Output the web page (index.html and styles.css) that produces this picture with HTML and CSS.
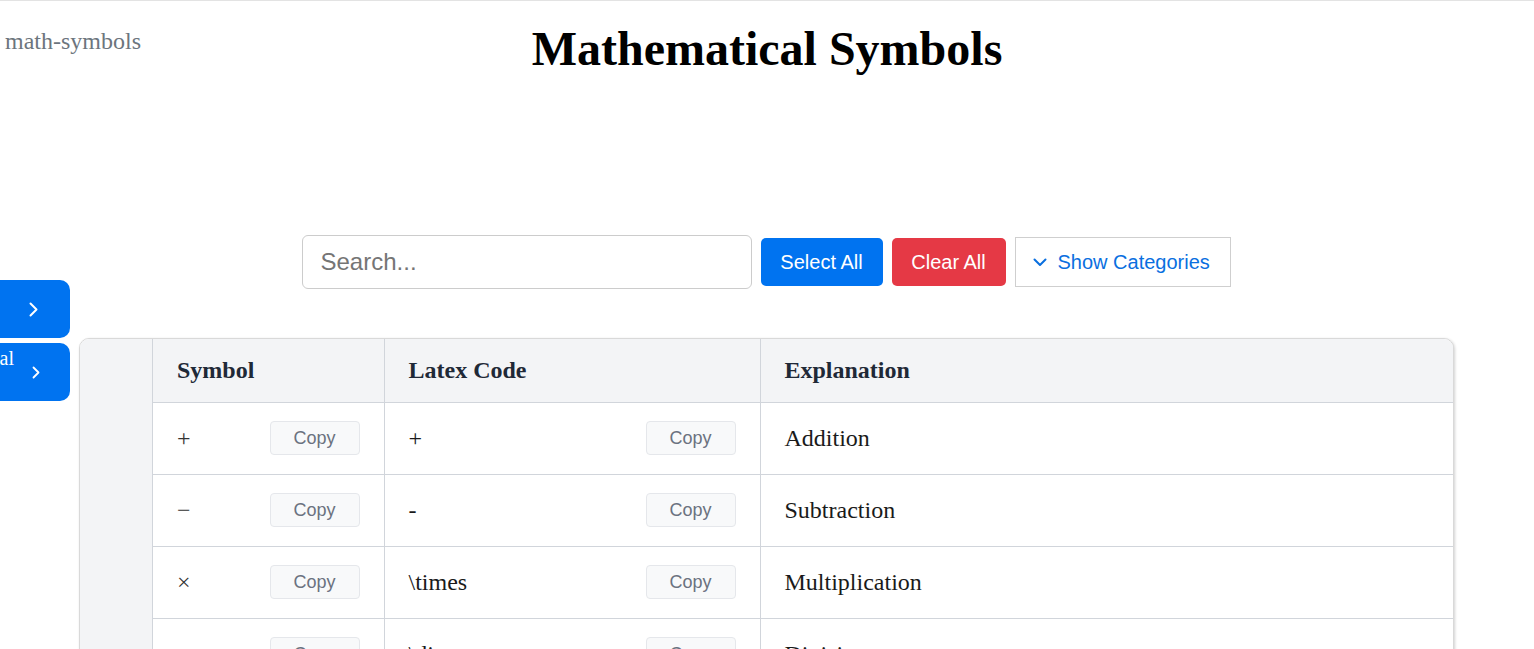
FILE: index.html
```html
<!DOCTYPE html>
<html lang="en">
<head>
<meta charset="utf-8">
<title>Mathematical Symbols</title>
<link rel="stylesheet" href="styles.css">
</head>
<body>
<div class="page">
  <header class="top">
    <div class="crumb">math-symbols</div>
    <h1 class="title">Mathematical Symbols</h1>
    <div></div>
  </header>

  <div class="controls">
    <input class="search" type="text" placeholder="Search...">
    <button class="btn btn-primary">Select All</button>
    <button class="btn btn-danger">Clear All</button>
    <button class="btn btn-outline">
      <svg class="chev-down" width="14" height="9" viewBox="0 0 14 9"><polyline points="1.5,1.5 7,7 12.5,1.5" fill="none" stroke="currentColor" stroke-width="2" stroke-linecap="round" stroke-linejoin="round"/></svg>
      <span>Show Categories</span>
    </button>
  </div>

  <div class="table-card">
    <div class="side-col"></div>
    <table class="sym-table">
      <colgroup><col class="c1"><col class="c2"><col></colgroup>
      <thead>
        <tr><th>Symbol</th><th>Latex Code</th><th>Explanation</th></tr>
      </thead>
      <tbody>
        <tr>
          <td><div class="cell"><span class="sym">+</span><button class="copy">Copy</button></div></td>
          <td><div class="cell"><span class="code">+</span><button class="copy">Copy</button></div></td>
          <td>Addition</td>
        </tr>
        <tr>
          <td><div class="cell"><span class="sym">−</span><button class="copy">Copy</button></div></td>
          <td><div class="cell"><span class="code">-</span><button class="copy">Copy</button></div></td>
          <td>Subtraction</td>
        </tr>
        <tr>
          <td><div class="cell"><span class="sym">×</span><button class="copy">Copy</button></div></td>
          <td><div class="cell"><span class="code">\times</span><button class="copy">Copy</button></div></td>
          <td>Multiplication</td>
        </tr>
        <tr>
          <td><div class="cell"><span class="sym">÷</span><button class="copy">Copy</button></div></td>
          <td><div class="cell"><span class="code">\div</span><button class="copy">Copy</button></div></td>
          <td>Division</td>
        </tr>
      </tbody>
    </table>
  </div>
</div>

<nav class="side-panel">
  <button class="side-btn side-btn-1">
    <span class="side-text">Operators</span>
    <svg width="9" height="15" viewBox="0 0 9 15"><polyline points="1.5,1.5 7.5,7.5 1.5,13.5" fill="none" stroke="#fff" stroke-width="2" stroke-linecap="round" stroke-linejoin="round"/></svg>
  </button>
  <button class="side-btn side-btn-2">
    <span class="side-text side-text-2">Geometrical</span>
    <svg width="8" height="13" viewBox="0 0 8 13"><polyline points="1.5,1.5 6.5,6.5 1.5,11.5" fill="none" stroke="#fff" stroke-width="1.8" stroke-linecap="round" stroke-linejoin="round"/></svg>
  </button>
</nav>
</body>
</html>
```

FILE: styles.css
```css
* { box-sizing: border-box; }

html, body {
  margin: 0;
  padding: 0;
  background: #fff;
}

body {
  font-family: "Liberation Serif", "Times New Roman", serif;
  color: #111;
  overflow: hidden;
}

.page {
  border-top: 1px solid #e3e3e3;
}

.top {
  display: grid;
  grid-template-columns: 1fr auto 1fr;
  align-items: start;
}

.crumb {
  padding: 26px 0 0 5px;
  font-size: 24px;
  line-height: 28px;
  color: #6c757d;
}

.title {
  margin: 20px 0 0;
  font-size: 48px;
  line-height: 56px;
  font-weight: bold;
  color: #000;
}

.controls {
  display: flex;
  justify-content: center;
  align-items: center;
  gap: 9px;
  margin-top: 158px;
  padding-right: 2px;
}

.search {
  width: 450px;
  height: 54px;
  padding: 0 18px;
  border: 1px solid #cccccc;
  border-radius: 6px;
  font-family: "Liberation Sans", Arial, sans-serif;
  font-size: 24px;
  color: #222;
  outline: none;
}

.search::placeholder { color: #757575; }

.btn {
  display: inline-flex;
  align-items: center;
  justify-content: center;
  height: 48px;
  padding: 0;
  border: none;
  border-radius: 5px;
  font-family: "Liberation Sans", Arial, sans-serif;
  font-size: 20px;
  line-height: 24px;
  color: #fff;
  cursor: pointer;
}

.btn-primary { width: 122px; background: #0073f0; }
.btn-danger { width: 114px; background: #e53945; }

.btn-outline {
  width: 216px;
  height: 50px;
  justify-content: flex-start;
  padding: 0 0 0 17px;
  border: 1px solid #cfcfcf;
  border-radius: 0;
  background: #fff;
  color: #0a6fdf;
  gap: 11px;
}

.chev-down { display: block; }

.table-card {
  display: flex;
  margin: 49px 80px 0 79px;
  border: 1px solid #d9d9d9;
  border-radius: 10px;
  overflow: hidden;
  box-shadow: 1px 1px 3px rgba(0, 0, 0, 0.18);
  background: #fff;
}

.side-col {
  flex: 0 0 73px;
  background: #f3f4f6;
  border-right: 1px solid #d1d5db;
}

.sym-table {
  flex: 1;
  border-collapse: collapse;
  table-layout: fixed;
}

.c1 { width: 231px; }
.c2 { width: 376px; }

.sym-table th {
  height: 63px;
  padding: 0 24px;
  background: #f3f4f6;
  border-bottom: 1px solid #d1d5db;
  border-right: 1px solid #d1d5db;
  text-align: left;
  font-size: 24px;
  font-weight: bold;
  color: #1f2937;
}

.sym-table td {
  height: 72px;
  padding: 0 24px;
  border-bottom: 1px solid #d1d5db;
  border-right: 1px solid #d1d5db;
  font-size: 24px;
  color: #1a1a1a;
}

.sym-table th:last-child,
.sym-table td:last-child { border-right: none; }

.cell {
  display: flex;
  justify-content: space-between;
  align-items: center;
}

.sym { color: #333; }
.code { color: #1a1a1a; }

.copy {
  width: 90px;
  height: 34px;
  padding: 0;
  border: 1px solid #e5e7eb;
  border-radius: 4px;
  background: #f8f9fa;
  font-family: "Liberation Sans", Arial, sans-serif;
  font-size: 18px;
  color: #6b7280;
  cursor: pointer;
}

.side-panel {
  position: fixed;
  left: -130px;
  top: 280px;
  width: 200px;
  display: flex;
  flex-direction: column;
  gap: 5px;
}

.side-btn {
  display: flex;
  align-items: center;
  height: 58px;
  padding: 0 32px 0 16px;
  border: none;
  border-radius: 10px;
  background: #0073f0;
  color: #fff;
  font-family: "Liberation Serif", "Times New Roman", serif;
  font-size: 20px;
  cursor: pointer;
}

.side-btn-1 { justify-content: space-between; }

.side-btn-2 {
  justify-content: flex-end;
  padding-right: 30px;
  gap: 18px;
}

.side-text-2 {
  align-self: flex-start;
  margin-top: 4px;
}
```
